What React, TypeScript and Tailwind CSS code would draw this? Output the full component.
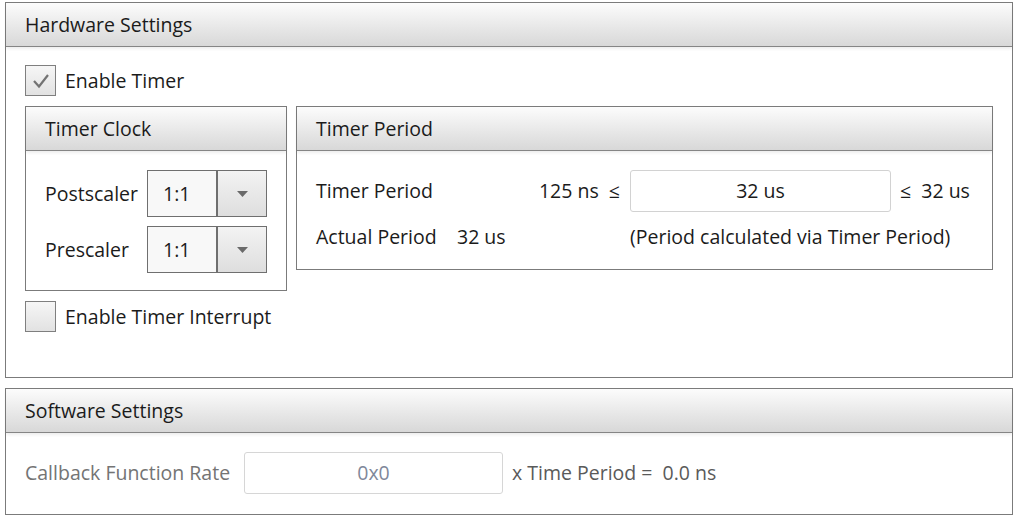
import { ReactNode } from "react";

const font = { fontFamily: '"Open Sans", "Noto Sans", sans-serif' };

function Panel({ title, className, children }: { title: string; className?: string; children: ReactNode }) {
  return (
    <div className={`flex flex-col border border-[#7b7b7b] bg-white ${className ?? ""}`}>
      <div className="h-[44px] shrink-0 flex items-center pl-[19px] border-b border-[#858585] bg-gradient-to-b from-[#fcfcfc] to-[#d8d8d8] shadow-[0_2px_3px_rgba(0,0,0,0.07)] text-[#1b1b1b]">
        {title}
      </div>
      {children}
    </div>
  );
}

function Checkbox({ checked, label }: { checked?: boolean; label: string }) {
  return (
    <div className="flex items-center gap-[9px]">
      <div className="w-[31px] h-[31px] border border-[#7f7f7f] bg-gradient-to-b from-[#f6f6f6] to-[#e2e2e2] flex items-center justify-center">
        {checked && (
          <svg width="20" height="18" viewBox="0 0 20 18">
            <polyline points="3,9 8,14.5 17,3" fill="none" stroke="#737373" strokeWidth="2.2" />
          </svg>
        )}
      </div>
      <span className="text-[#1b1b1b]">{label}</span>
    </div>
  );
}

function Combo({ value }: { value: string }) {
  return (
    <div className="flex w-[120px] h-[47px] border border-[#6f6f6f]">
      <div className="w-[70px] flex items-center pl-[15px] bg-[#f8f8f8] border-r-2 border-[#6f6f6f] text-[#1b1b1b]">{value}</div>
      <div className="flex-1 flex items-center justify-center bg-gradient-to-b from-[#f3f3f3] to-[#dedede]">
        <svg width="11" height="6" viewBox="0 0 11 6">
          <polygon points="0,0 11,0 5.5,6" fill="#6a6a6a" />
        </svg>
      </div>
    </div>
  );
}

export default function App() {
  return (
    <div className="w-[1023px] h-[524px] bg-white pt-[2px] pl-[5px] text-[19.5px] leading-[26px]" style={font}>
      <Panel title="Hardware Settings" className="w-[1008px] h-[376px]">
        <div className="flex flex-col pt-[18px] pl-[19px]">
          <Checkbox checked label="Enable Timer" />
          <div className="flex gap-[9px] mt-[10px] items-start">
            <Panel title="Timer Clock" className="w-[262px] h-[185px]">
              <div className="flex flex-col gap-[9px] pt-[19px] pl-[19px]">
                <div className="flex items-center">
                  <span className="w-[102px] text-[#1b1b1b]">Postscaler</span>
                  <Combo value="1:1" />
                </div>
                <div className="flex items-center">
                  <span className="w-[102px] text-[#1b1b1b]">Prescaler</span>
                  <Combo value="1:1" />
                </div>
              </div>
            </Panel>
            <Panel title="Timer Period" className="w-[697px] h-[164px]">
              <div className="grid grid-cols-[141px_173px_261px_1fr] gap-y-[12px] pt-[19px] pl-[19px] items-center text-[#1b1b1b]">
                <span>Timer Period</span>
                <span className="text-right pr-[10px] whitespace-pre">125 ns  ≤</span>
                <div className="h-[42px] border border-[#d2d2d2] rounded-[3px] bg-white flex items-center justify-center">32 us</div>
                <span className="pl-[9px] whitespace-pre">≤  32 us</span>
                <span>Actual Period</span>
                <span>32 us</span>
                <span className="col-span-2">(Period calculated via Timer Period)</span>
              </div>
            </Panel>
          </div>
          <div className="mt-[10px]">
            <Checkbox label="Enable Timer Interrupt" />
          </div>
        </div>
      </Panel>
      <Panel title="Software Settings" className="w-[1008px] h-[127px] mt-[10px]">
        <div className="flex items-center pt-[19px] pl-[19px]">
          <span className="w-[219px] text-[#747474]">Callback Function Rate</span>
          <div className="w-[259px] h-[42px] border border-[#d6d6d6] rounded-[3px] flex items-center justify-center text-[#7f889a]">0x0</div>
          <span className="ml-[9px] text-[#5a5a5a] whitespace-pre">x Time Period =  0.0 ns</span>
        </div>
      </Panel>
    </div>
  );
}
